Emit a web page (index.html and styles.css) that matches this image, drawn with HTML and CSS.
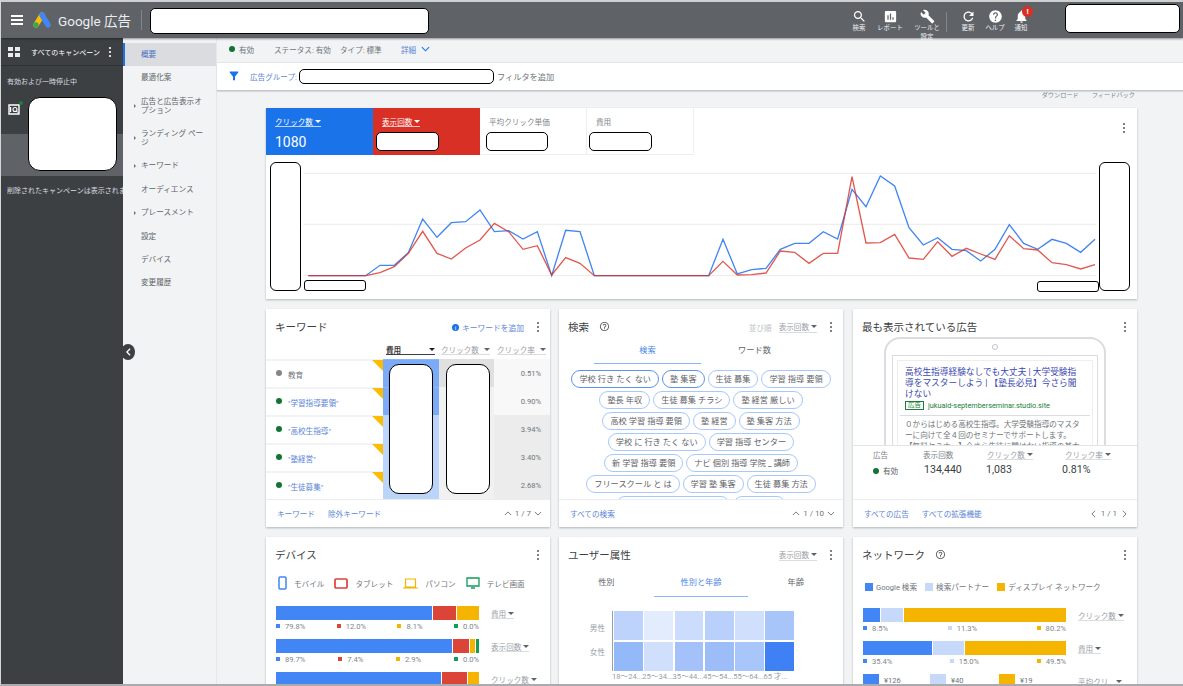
FILE: index.html
```html
<!DOCTYPE html>
<html lang="ja">
<head>
    <meta charset="UTF-8">
    <meta name="viewport" content="width=device-width, initial-scale=1.0">
    <title>Google 広告</title>
    <link rel="stylesheet" href="styles.css">
</head>
<body>
    <svg class="defs" width="0" height="0">
        <symbol id="kebab" viewBox="0 0 4 12"><circle cx="2" cy="2" r="1.1"/><circle cx="2" cy="6" r="1.1"/><circle cx="2" cy="10" r="1.1"/></symbol>
        <symbol id="up" viewBox="0 0 10 6"><path d="M1 5l4-4 4 4" fill="none" stroke="currentColor" stroke-width="1.2"/></symbol>
        <symbol id="down" viewBox="0 0 10 6"><path d="M1 1l4 4 4-4" fill="none" stroke="currentColor" stroke-width="1.2"/></symbol>
        <symbol id="left" viewBox="0 0 6 10"><path d="M5 1L1 5l4 4" fill="none" stroke="currentColor" stroke-width="1.2"/></symbol>
        <symbol id="right" viewBox="0 0 6 10"><path d="M1 1l4 4-4 4" fill="none" stroke="currentColor" stroke-width="1.2"/></symbol>
        <symbol id="help" viewBox="0 0 24 24"><path d="M11 18h2v-2h-2v2zm1-16C6.48 2 2 6.48 2 12s4.48 10 10 10 10-4.48 10-10S17.52 2 12 2zm0 18c-4.41 0-8-3.59-8-8s3.59-8 8-8 8 3.59 8 8-3.59 8-8 8zm0-14c-2.21 0-4 1.79-4 4h2c0-1.1.9-2 2-2s2 .9 2 2c0 2-3 1.75-3 5h2c0-2.25 3-2.5 3-5 0-2.21-1.79-4-4-4z"/></symbol>
    </svg>

    <div class="app">
        <header class="topbar">
            <div class="burger"><span></span><span></span><span></span></div>
            <svg class="ads-logo" viewBox="0 0 18 16">
                <path d="M9 3L3 13" stroke="#fbbc04" stroke-width="5.4" stroke-linecap="round"/>
                <path d="M9 3l6 10" stroke="#4285f4" stroke-width="5.4" stroke-linecap="round"/>
                <circle cx="3" cy="13" r="2.7" fill="#34a853"/>
            </svg>
            <div class="brand">Google 広告</div>
            <div class="top-divider"></div>
            <div class="mask top-search"></div>
            <div class="top-tools">
                <div class="tool tool-search">
                    <svg viewBox="0 0 24 24"><path d="M15.5 14h-.79l-.28-.27C15.41 12.59 16 11.11 16 9.5 16 5.91 13.09 3 9.5 3S3 5.91 3 9.5 5.91 16 9.5 16c1.61 0 3.09-.59 4.23-1.57l.27.28v.79l5 4.99L20.49 19l-4.99-5zm-6 0C7.01 14 5 11.99 5 9.5S7.01 5 9.5 5 14 7.01 14 9.5 11.99 14 9.5 14z"/></svg>
                    <span>検索</span>
                </div>
                <div class="tool tool-report">
                    <svg viewBox="0 0 24 24"><path d="M19 3H5c-1.1 0-2 .9-2 2v14c0 1.1.9 2 2 2h14c1.1 0 2-.9 2-2V5c0-1.1-.9-2-2-2zM9 17H7v-7h2v7zm4 0h-2V7h2v10zm4 0h-2v-4h2v4z"/></svg>
                    <span>レポート</span>
                </div>
                <div class="tool tool-wrench">
                    <svg viewBox="0 0 24 24"><path d="M22.7 19l-9.1-9.1c.9-2.3.4-5-1.5-6.9-2-2-5-2.4-7.4-1.3L9 6 6 9 1.6 4.7C.4 7.1.9 10.1 2.9 12.1c1.9 1.9 4.6 2.4 6.9 1.5l9.1 9.1c.4.4 1 .4 1.4 0l2.3-2.3c.5-.4.5-1.1.1-1.4z"/></svg>
                    <span>ツールと<br>設定</span>
                </div>
                <div class="tool-sep"></div>
                <div class="tool tool-refresh">
                    <svg viewBox="0 0 24 24"><path d="M17.65 6.35C16.2 4.9 14.21 4 12 4c-4.42 0-7.99 3.58-7.99 8s3.57 8 7.99 8c3.73 0 6.84-2.55 7.73-6h-2.08c-.82 2.33-3.04 4-5.65 4-3.31 0-6-2.69-6-6s2.69-6 6-6c1.66 0 3.14.69 4.22 1.78L13 11h7V4l-2.35 2.35z"/></svg>
                    <span>更新</span>
                </div>
                <div class="tool tool-help">
                    <svg viewBox="0 0 24 24"><path d="M12 2C6.48 2 2 6.48 2 12s4.48 10 10 10 10-4.48 10-10S17.52 2 12 2zm1 17h-2v-2h2v2zm2.07-7.75l-.9.92C13.45 12.9 13 13.5 13 15h-2v-.5c0-1.1.45-2.1 1.17-2.83l1.24-1.26c.37-.36.59-.86.59-1.41 0-1.1-.9-2-2-2s-2 .9-2 2H8c0-2.21 1.79-4 4-4s4 1.79 4 4c0 .88-.36 1.68-.93 2.25z"/></svg>
                    <span>ヘルプ</span>
                </div>
                <div class="tool tool-bell">
                    <svg viewBox="0 0 24 24"><path d="M12 22c1.1 0 2-.9 2-2h-4c0 1.1.89 2 2 2zm6-6v-5c0-3.07-1.64-5.64-4.5-6.32V4c0-.83-.67-1.5-1.5-1.5s-1.5.67-1.5 1.5v.68C7.63 5.36 6 7.92 6 11v5l-2 2v1h16v-1l-2-2z"/></svg>
                    <span>通知</span>
                    <b class="alert">!</b>
                </div>
            </div>
            <div class="mask top-account"></div>
        </header>

        <div class="workspace">
            <aside class="sidebar">
                <div class="side-head">
                    <div class="grid-icon"><i></i><i></i><i></i><i></i></div>
                    <span>すべてのキャンペーン</span>
                    <svg class="kebab"><use href="#kebab"/></svg>
                </div>
                <div class="side-label">有効および一時停止中</div>
                <div class="campaign">
                    <svg class="cam-icon" viewBox="0 0 12 11">
                        <path d="M1 1h10v9H1z" fill="none" stroke="#fff" stroke-width="1.4"/>
                        <circle cx="7" cy="5.5" r="2" fill="none" stroke="#fff" stroke-width="1.1"/>
                        <path d="M2.500 3v5" stroke="#fff" stroke-width="1.4"/>
                        <path d="M8.500 7l2 2" stroke="#fff" stroke-width="1"/>
                    </svg>
                    <i class="cam-dot"></i>
                </div>
                <div class="side-selected"></div>
                <div class="side-note">削除されたキャンペーンは表示されません</div>
                <div class="mask side-mask"></div>
            </aside>
            <button class="collapse" aria-label="折りたたむ"><svg viewBox="0 0 6 10"><path d="M5 1L1 5l4 4" fill="none" stroke="#fff" stroke-width="1.600"/></svg></button>

            <nav class="subnav">
                <a class="nav-item active">概要</a>
                <a class="nav-item">最適化案</a>
                <a class="nav-item more">広告と広告表示オプション</a>
                <a class="nav-item more">ランディング ページ</a>
                <a class="nav-item more">キーワード</a>
                <a class="nav-item">オーディエンス</a>
                <a class="nav-item more">プレースメント</a>
                <a class="nav-item">設定</a>
                <a class="nav-item">デバイス</a>
                <a class="nav-item">変更履歴</a>
            </nav>

            <main class="main">
                <div class="status-bar">
                    <i class="dot green"></i><span class="status-on">有効</span>
                    <span class="status-a">ステータス: 有効</span>
                    <span class="status-b">タイプ: 標準</span>
                    <span class="status-more">詳細</span>
                    <svg class="status-chev"><use href="#down"/></svg>
                </div>
                <div class="filter-bar">
                    <svg class="funnel" viewBox="0 0 24 24"><path d="M3.500 4.800C6 8 10 13 10 13v7.500h4V13s4-5 6.500-8.200c.5-.7 0-1.800-.8-1.800H4.300c-.8 0-1.300 1.100-.8 1.800z"/></svg>
                    <span class="filter-name">広告グループ:</span>
                    <div class="mask filter-mask"></div>
                    <span class="filter-add">フィルタを追加</span>
                </div>

                <div class="content">
                    <div class="page-links"><span>ダウンロード</span><span>フィードバック</span></div>

                    <section class="card summary">
                        <div class="metric-tabs">
                            <div class="metric blue">
                                <span class="drop on-color">クリック数</span>
                                <strong>1080</strong>
                            </div>
                            <div class="metric red">
                                <span class="drop on-color">表示回数</span>
                                <div class="mask metric-mask"></div>
                            </div>
                            <div class="metric">
                                <span>平均クリック単価</span>
                                <div class="mask metric-mask"></div>
                            </div>
                            <div class="metric">
                                <span>費用</span>
                                <div class="mask metric-mask"></div>
                            </div>
                            <svg class="kebab summary-kebab"><use href="#kebab"/></svg>
                        </div>
                        <div class="chart">
                            <svg viewBox="-12 -15 2613 432" width="871" height="144">
                                <g class="chart-grid">
                                    <path d="M100 40H2480"/>
                                    <path d="M100 193H2480"/>
                                    <path d="M100 347H2480"/>
                                </g>
                                <polyline class="line-blue" points="115,347 158,347 201,347 244,347 287,347 330,316 373,316 415,278 458,177 501,232 544,188 587,185 630,150 673,215 716,212 759,237 802,215 845,347 887,211 930,215 973,347 1316,347 1359,238 1402,342 1445,329 1488,325 1531,268 1574,250 1617,250 1660,215 1703,237 1746,88 1788,140 1831,48 1874,78 1917,203 1960,255 2003,233 2046,268 2089,272 2132,303 2175,268 2218,194 2261,250 2303,268 2346,238 2389,250 2432,277 2475,238"/>
                                <polyline class="line-red" points="115,347 158,347 201,347 244,347 287,347 330,338 373,320 415,280 458,214 501,280 544,297 587,264 630,240 673,190 716,215 759,268 802,257 845,345 887,293 930,310 973,347 1316,347 1359,304 1402,345 1445,344 1488,339 1531,273 1574,277 1617,310 1660,280 1703,280 1746,50 1788,249 1831,248 1874,223 1917,294 1960,298 2003,245 2046,289 2089,265 2132,282 2175,298 2218,227 2261,266 2303,270 2346,308 2389,314 2432,327 2475,314"/>
                            </svg>
                            <div class="mask chart-y chart-y-left"></div>
                            <div class="mask chart-y chart-y-right"></div>
                            <div class="mask chart-x chart-x-left"></div>
                            <div class="mask chart-x chart-x-right"></div>
                        </div>
                    </section>

                    <div class="card-grid">
                        <section class="card">
                            <div class="card-head">
                                <h2>キーワード</h2>
                                <span class="add-kw"><i class="info">i</i>キーワードを追加</span>
                                <svg class="kebab"><use href="#kebab"/></svg>
                            </div>
                            <div class="kw-table">
                                <div class="kw-row kw-titles">
                                    <span></span>
                                    <span class="drop strong">費用</span>
                                    <span class="drop">クリック数</span>
                                    <span class="drop">クリック率</span>
                                </div>
                                <div class="kw-row">
                                    <div class="kw-name"><i class="dot grey"></i>教育</div>
                                    <div class="cost-high"></div><div class="click-high"></div><div class="ctr-light">0.51%</div>
                                </div>
                                <div class="kw-row">
                                    <div class="kw-name link"><i class="dot green"></i>"学習指導要領"</div>
                                    <div class="cost-high"></div><div class="click-low"></div><div class="ctr-light">0.90%</div>
                                </div>
                                <div class="kw-row">
                                    <div class="kw-name link"><i class="dot green"></i>"高校生指導"</div>
                                    <div class="cost-low"></div><div class="click-low"></div><div class="ctr-dark">3.94%</div>
                                </div>
                                <div class="kw-row">
                                    <div class="kw-name link"><i class="dot green"></i>"塾経営"</div>
                                    <div class="cost-low"></div><div class="click-low"></div><div class="ctr-dark">3.40%</div>
                                </div>
                                <div class="kw-row">
                                    <div class="kw-name link"><i class="dot green"></i>"生徒募集"</div>
                                    <div class="cost-low"></div><div class="click-low"></div><div class="ctr-dark">2.68%</div>
                                </div>
                                <div class="mask kw-mask kw-mask-a"></div>
                                <div class="mask kw-mask kw-mask-b"></div>
                            </div>
                            <div class="card-foot">
                                <a>キーワード</a><a>除外キーワード</a>
                                <span class="pager"><svg class="chev-h"><use href="#up"/></svg>1 / 7<svg class="chev-h"><use href="#down"/></svg></span>
                            </div>
                        </section>

                        <section class="card">
                            <div class="card-head">
                                <h2>検索</h2>
                                <svg class="help-icon"><use href="#help"/></svg>
                                <span class="sort-label">並び順</span>
                                <span class="drop">表示回数</span>
                                <svg class="kebab"><use href="#kebab"/></svg>
                            </div>
                            <div class="tabs search-tabs">
                                <span class="tab active">検索</span>
                                <span class="tab">ワード数</span>
                            </div>
                            <div class="chips">
                                <div class="chip-row"><span class="chip dark">学校 行き たく ない</span><span class="chip dark">塾 集客</span><span class="chip">生徒 募集</span><span class="chip">学習 指導 要領</span></div>
                                <div class="chip-row"><span class="chip">塾長 年収</span><span class="chip">生徒 募集 チラシ</span><span class="chip">塾 経営 厳しい</span></div>
                                <div class="chip-row"><span class="chip">高校 学習 指導 要領</span><span class="chip">塾 経営</span><span class="chip">塾 集客 方法</span></div>
                                <div class="chip-row"><span class="chip">学校 に 行き たく ない</span><span class="chip">学習 指導 センター</span></div>
                                <div class="chip-row"><span class="chip">新 学習 指導 要領</span><span class="chip">ナビ 個別 指導 学院 _ 講師</span></div>
                                <div class="chip-row"><span class="chip">フリースクール と は</span><span class="chip">学習 塾 集客</span><span class="chip">生徒 募集 方法</span></div>
                                <div class="chip-row"><span class="chip">中学生 学校 行き たく ない</span><span class="chip">塾 経営 本</span></div>
                            </div>
                            <div class="card-foot">
                                <a>すべての検索</a>
                                <span class="pager"><svg class="chev-h"><use href="#up"/></svg>1 / 10<svg class="chev-h"><use href="#down"/></svg></span>
                            </div>
                        </section>

                        <section class="card">
                            <div class="card-head">
                                <h2>最も表示されている広告</h2>
                                <svg class="kebab"><use href="#kebab"/></svg>
                            </div>
                            <div class="phone-wrap">
                                <div class="phone">
                                    <i class="phone-cam"></i>
                                    <div class="phone-screen">
                                        <div class="ad">
                                            <div class="ad-title">高校生指導経験なしでも大丈夫 | 大学受験指導をマスターしよう | 【塾長必見】今さら聞けない</div>
                                            <div class="ad-url"><span class="ad-badge">広告</span>jukuaid-septemberseminar.studio.site</div>
                                            <div class="ad-text">０からはじめる高校生指導。大学受験指導のマスターに向けて全４回のセミナーでサポートします。【無料セミナー】今さら生徒に聞けない指導の基本</div>
                                        </div>
                                    </div>
                                </div>
                            </div>
                            <div class="ad-stats">
                                <span class="stat-label">広告</span>
                                <span class="stat-label">表示回数</span>
                                <span class="drop">クリック数</span>
                                <span class="drop">クリック率</span>
                                <span class="stat-state"><i class="dot green"></i>有効</span>
                                <span class="stat-value">134,440</span>
                                <span class="stat-value">1,083</span>
                                <span class="stat-value">0.81%</span>
                            </div>
                            <div class="card-foot">
                                <a>すべての広告</a><a>すべての拡張機能</a>
                                <span class="pager"><svg class="chev-v"><use href="#left"/></svg>1 / 1<svg class="chev-v"><use href="#right"/></svg></span>
                            </div>
                        </section>

                        <section class="card">
                            <div class="card-head">
                                <h2>デバイス</h2>
                                <svg class="kebab"><use href="#kebab"/></svg>
                            </div>
                            <div class="device-legend">
                                <svg class="dev-phone" viewBox="0 0 9 14"><rect x="1" y="1" width="7" height="12" rx="1" fill="none" stroke="#4285f4" stroke-width="1.500"/></svg><span>モバイル</span>
                                <svg class="dev-tablet" viewBox="0 0 14 11"><rect x="1" y="1" width="12" height="9" rx="1" fill="none" stroke="#db4437" stroke-width="1.700"/></svg><span>タブレット</span>
                                <svg class="dev-laptop" viewBox="0 0 15 11"><path d="M2.500 1h10v8h-10zM0 10h15" fill="none" stroke="#f4b400" stroke-width="1.200"/></svg><span>パソコン</span>
                                <svg class="dev-tv" viewBox="0 0 14 12"><path d="M1 1h12v8H1zM5 11h4" fill="none" stroke="#0f9d58" stroke-width="1.300"/></svg><span>テレビ画面</span>
                            </div>
                            <div class="bar-row">
                                <div class="bar-col">
                                    <div class="bar"><i class="c-blue" style="width:77.3%"></i><i class="c-red" style="width:11.8%"></i><i class="c-yellow" style="width:10.9%"></i></div>
                                    <div class="bar-notes"><span class="n-blue">79.8%</span><span class="n-red">12.0%</span><span class="n-yellow">8.1%</span><span class="n-green">0.0%</span></div>
                                </div>
                                <span class="drop">費用</span>
                            </div>
                            <div class="bar-row">
                                <div class="bar-col">
                                    <div class="bar"><i class="c-blue" style="width:87%"></i><i class="c-red" style="width:8.400%"></i><i class="c-yellow" style="width:3%"></i><i class="c-green" style="width:1.600%"></i></div>
                                    <div class="bar-notes"><span class="n-blue">89.7%</span><span class="n-red">7.4%</span><span class="n-yellow">2.9%</span><span class="n-green">0.0%</span></div>
                                </div>
                                <span class="drop">表示回数</span>
                            </div>
                            <div class="bar-row">
                                <div class="bar-col">
                                    <div class="bar"><i class="c-blue" style="width:82%"></i><i class="c-red" style="width:12.800%"></i><i class="c-yellow" style="width:5.200%"></i></div>
                                </div>
                                <span class="drop">クリック数</span>
                            </div>
                        </section>

                        <section class="card">
                            <div class="card-head">
                                <h2>ユーザー属性</h2>
                                <span class="drop head-drop">表示回数</span>
                                <svg class="kebab"><use href="#kebab"/></svg>
                            </div>
                            <div class="tabs demo-tabs">
                                <span class="tab">性別</span>
                                <span class="tab active">性別と年齢</span>
                                <span class="tab">年齢</span>
                            </div>
                            <div class="heat">
                                <div class="heat-y"><span>男性</span><span>女性</span></div>
                                <div class="heat-grid">
                                    <i style="background:#bdd3fb"></i><i style="background:#e3ecfd"></i><i style="background:#cbdcfc"></i><i style="background:#b8d0fa"></i><i style="background:#cfdffc"></i><i style="background:#a7c5f9"></i>
                                    <i style="background:#94b9f8"></i><i style="background:#cfdffc"></i><i style="background:#a4c2f9"></i><i style="background:#9cbdf8"></i><i style="background:#a8c6f9"></i><i style="background:#3f80f4"></i>
                                </div>
                                <div class="heat-x"><span>18～24...</span><span>25～34...</span><span>35～44...</span><span>45～54...</span><span>55～64...</span><span>65 才...</span></div>
                            </div>
                        </section>

                        <section class="card">
                            <div class="card-head">
                                <h2>ネットワーク</h2>
                                <svg class="help-icon"><use href="#help"/></svg>
                                <svg class="kebab"><use href="#kebab"/></svg>
                            </div>
                            <div class="net-legend">
                                <span class="k-blue">Google 検索</span>
                                <span class="k-light">検索パートナー</span>
                                <span class="k-yellow">ディスプレイ ネットワーク</span>
                            </div>
                            <div class="bar-row">
                                <div class="bar-col">
                                    <div class="bar"><i class="c-blue" style="width:8.800%"></i><i class="c-light" style="width:11.400%"></i><i class="c-yellow" style="width:79.800%"></i></div>
                                    <div class="bar-notes"><span class="n-blue">8.5%</span><span class="n-light">11.3%</span><span class="n-yellow">80.2%</span></div>
                                </div>
                                <span class="drop">クリック数</span>
                            </div>
                            <div class="bar-row">
                                <div class="bar-col">
                                    <div class="bar"><i class="c-blue" style="width:34.500%"></i><i class="c-light" style="width:15.800%"></i><i class="c-yellow" style="width:49.700%"></i></div>
                                    <div class="bar-notes"><span class="n-blue">35.4%</span><span class="n-light">15.0%</span><span class="n-yellow">49.5%</span></div>
                                </div>
                                <span class="drop">費用</span>
                            </div>
                            <div class="bar-row">
                                <div class="cpc-col">
                                    <div class="cpc"><i class="c-blue"></i>¥126</div>
                                    <div class="cpc"><i class="c-light"></i>¥40</div>
                                    <div class="cpc"><i class="c-yellow"></i>¥19</div>
                                </div>
                                <span class="drop">平均クリ...</span>
                            </div>
                        </section>
                    </div>
                </div>
            </main>
        </div>
    </div>
</body>
</html>
```

FILE: styles.css
```css
* {
    box-sizing: border-box;
}
html, body {
    margin: 0;
    height: 686px;
    overflow: hidden;
}
body {
    font-family: Roboto, "Noto Sans CJK JP", sans-serif;
    font-size: 7.6px;
    color: #70757a;
    background: #f1f3f4;
}
i {
    font-style: normal;
}
.defs {
    position: absolute;
}
.app {
    height: 686px;
    display: flex;
    flex-direction: column;
    overflow: hidden;
    border-top: 2px solid #cfd0d2;
    border-left: 1px solid #d5d6d8;
    border-bottom: 2px solid #a9abae;
}
.mask {
    background: #fff;
    border: 1.5px solid #000;
    border-radius: 5px;
}

/* top bar */
.topbar {
    height: 36px;
    flex: none;
    display: flex;
    align-items: center;
    background: #5f6368;
    color: #fff;
    position: relative;
    z-index: 3;
    box-shadow: 0 1px 2px rgba(0, 0, 0, 0.4);
}
.burger {
    width: 12px;
    margin-left: 10px;
    display: flex;
    flex-direction: column;
    gap: 2px;
}
.burger span {
    height: 2px;
    background: #fff;
}
.ads-logo {
    width: 18px;
    height: 16px;
    margin-left: 10px;
}
.brand {
    margin-left: 7px;
    font-size: 13.5px;
    color: #eceef0;
    white-space: nowrap;
    width: 74px;
}
.top-divider {
    width: 1px;
    height: 20px;
    margin-left: 9px;
    background: #80868b;
}
.top-search {
    width: 279px;
    height: 26px;
    margin-left: 8px;
    margin-top: 1px;
}
.top-tools {
    margin-left: auto;
    display: flex;
    align-items: flex-start;
    height: 36px;
}
.tool {
    position: relative;
    display: flex;
    flex-direction: column;
    align-items: center;
    padding-top: 7px;
    font-size: 6.4px;
    line-height: 9px;
    text-align: center;
    white-space: nowrap;
    color: #f1f3f4;
}
.tool svg {
    width: 15px;
    height: 15px;
    fill: #fff;
}
.tool-search { width: 24px; }
.tool-report { width: 28px; margin-left: 5px; }
.tool-wrench { width: 30px; margin-left: 8px; }
.tool-sep {
    width: 1px;
    height: 20px;
    margin: 10px 11px 0 4px;
    background: #80868b;
}
.tool-refresh { width: 20px; }
.tool-help { width: 26px; margin-left: 4px; }
.tool-bell { width: 20px; margin-left: 3px; margin-right: 34px; }
.alert {
    position: absolute;
    top: 4px;
    left: 11px;
    width: 11px;
    height: 11px;
    border-radius: 50%;
    background: #d93025;
    color: #fff;
    font-size: 8px;
    line-height: 11px;
}
.top-account {
    width: 115px;
    height: 29px;
    margin-right: 3px;
    margin-top: -3px;
}

/* layout below the bar */
.workspace {
    flex: 1;
    min-height: 0;
    display: flex;
    position: relative;
}
.sidebar {
    width: 122px;
    flex: none;
    background: #3c4043;
    color: #dadce0;
    font-size: 7px;
    position: relative;
    overflow: hidden;
}
.side-head {
    height: 28px;
    display: flex;
    align-items: center;
    padding-left: 7px;
    color: #fff;
    white-space: nowrap;
    border-bottom: 1px solid #2f3235;
}
.grid-icon {
    display: grid;
    grid-template-columns: 5px 5px;
    gap: 2px;
    margin-right: 11px;
}
.grid-icon i {
    height: 4px;
    background: #e8eaed;
}
.side-head .kebab {
    fill: #fff;
    margin-left: 8px;
}
.side-label {
    padding: 10px 0 0 6px;
    height: 24px;
}
.campaign {
    height: 44px;
    padding: 14px 0 0 7px;
    position: relative;
}
.cam-icon {
    width: 12px;
    height: 11px;
    display: block;
}
.cam-dot {
    position: absolute;
    top: 11px;
    left: 18px;
    width: 4px;
    height: 4px;
    border-radius: 50%;
    background: #188038;
}
.side-selected {
    height: 42px;
    background: #5f6368;
}
.side-note {
    padding: 9px 0 0 6px;
    white-space: nowrap;
}
.side-mask {
    position: absolute;
    left: 27px;
    top: 59px;
    width: 89px;
    height: 74px;
    border-radius: 12px;
}
.collapse {
    position: absolute;
    left: 120px;
    top: 306px;
    width: 14px;
    height: 16px;
    padding: 0;
    border: none;
    border-radius: 50%;
    background: #3c4043;
    z-index: 2;
    display: flex;
    align-items: center;
    justify-content: center;
}
.collapse svg {
    width: 5px;
    height: 8px;
}
.subnav {
    width: 94px;
    flex: none;
    padding-top: 4.7px;
    background: #f1f3f4;
    border-right: 1px solid #e6e7e9;
}
.nav-item {
    display: block;
    position: relative;
    padding: 7.2px 11px 7.2px 18px;
    line-height: 9px;
    color: #5f6368;
}
.nav-item.active {
    background: #dadce0;
    border-left: 2px solid #1a73e8;
    padding-left: 16px;
    color: #4a6fc0;
}
.nav-item.more::before {
    content: "";
    position: absolute;
    left: 11px;
    top: 50%;
    margin-top: -2px;
    border-left: 2.5px solid #70757a;
    border-top: 2px solid transparent;
    border-bottom: 2px solid transparent;
}

/* main column */
.main {
    flex: 1;
    min-width: 0;
    display: flex;
    flex-direction: column;
}
.status-bar {
    height: 25px;
    flex: none;
    display: flex;
    align-items: center;
    padding: 0 0 2px 12px;
    border-bottom: 1px solid #e3e4e6;
}
.dot {
    display: inline-block;
    width: 6px;
    height: 6px;
    border-radius: 50%;
    margin-right: 4px;
}
.green { background: #137333; }
.grey { background: #80868b; }
.status-on { width: 35px; }
.status-a { width: 66px; }
.status-b { width: 61px; }
.status-more { color: #5c85d6; }
.status-chev {
    width: 9px;
    height: 6px;
    margin-left: 5px;
    color: #1a73e8;
}
.filter-bar {
    height: 28px;
    flex: none;
    display: flex;
    align-items: center;
    padding: 0 0 1px 11px;
    background: #fff;
    border-bottom: 1px solid #c4c6c9;
    box-shadow: 0 1px 1px rgba(0, 0, 0, 0.1);
    position: relative;
    z-index: 1;
}
.funnel {
    width: 12px;
    height: 12px;
    fill: #1a73e8;
    margin-right: 10px;
}
.filter-name {
    color: #5c85d6;
    width: 49px;
    white-space: nowrap;
}
.filter-mask {
    width: 195px;
    height: 15px;
}
.filter-add {
    margin-left: 3px;
    font-size: 8.2px;
}
.content {
    flex: 1;
    min-height: 0;
    padding: 0 46px 0 49px;
}
.page-links {
    height: 17px;
    display: flex;
    justify-content: flex-end;
    gap: 13px;
    padding-right: 2px;
    font-size: 6.2px;
    line-height: 8px;
    color: #80868b;
}

/* cards */
.card {
    background: #fff;
    box-shadow: 0 1px 2px rgba(60, 64, 67, 0.35);
    display: flex;
    flex-direction: column;
    overflow: hidden;
    min-width: 0;
}
.summary {
    height: 191px;
    margin-bottom: 10px;
}
.card-grid {
    display: grid;
    grid-template-columns: 293px 294px 284px;
    grid-auto-rows: 218px;
    row-gap: 10px;
}
.card-grid > .card {
    width: 284px;
}
.card-head {
    height: 36px;
    flex: none;
    display: flex;
    align-items: center;
    padding: 0 10px 0 9px;
}
.card-head h2 {
    margin: -2px 0 0;
    font-size: 10.5px;
    font-weight: 400;
    color: #3c4043;
    white-space: nowrap;
}
.card-head .kebab {
    margin-left: auto;
}
.card-head .drop + .kebab,
.add-kw + .kebab {
    margin-left: 12px;
}
.kebab {
    width: 4px;
    height: 12px;
    flex: none;
    fill: #5f6368;
}
.card-foot {
    height: 28px;
    flex: none;
    margin-top: auto;
    display: flex;
    align-items: center;
    gap: 13px;
    padding: 0 8px 0 11px;
    background: #fff;
    border-top: 1px solid #eceded;
    color: #5c85d6;
    position: relative;
}
.pager {
    margin-left: auto;
    display: flex;
    align-items: center;
    gap: 3px;
    color: #70757a;
    font-size: 8px;
}
.chev-h {
    width: 8px;
    height: 5px;
}
.chev-v {
    width: 5px;
    height: 8px;
    margin: 0 2px;
}
.drop {
    display: inline-flex;
    align-items: center;
    height: 11px;
    color: #9aa0a6;
    border-bottom: 1px solid #dadce0;
    white-space: nowrap;
}
.drop::after {
    content: "";
    margin-left: 2px;
    border-top: 3px solid #5f6368;
    border-left: 3px solid transparent;
    border-right: 3px solid transparent;
}
.drop.strong {
    font-weight: 700;
    color: #3c4043;
    border-color: #3c4043;
    justify-content: space-between;
}
.drop.strong::after {
    border-top-color: #202124;
}
.drop.on-color {
    color: #fff;
    border-color: rgba(255, 255, 255, 0.7);
}
.drop.on-color::after {
    border-top-color: #fff;
}

/* summary card */
.metric-tabs {
    height: 47px;
    flex: none;
    display: flex;
    align-items: flex-start;
}
.metric {
    width: 107px;
    height: 47px;
    padding: 8px 9px 0;
    border-right: 1px solid #eeeeee;
    border-bottom: 1px solid #eeeeee;
    position: relative;
    color: #80868b;
}
.metric.blue {
    background: #1a73e8;
    border: none;
    color: #fff;
}
.metric.blue strong {
    display: block;
    margin-top: 5px;
    font-size: 14px;
    line-height: 20px;
    font-weight: 400;
}
.metric.red {
    background: #d93025;
    border: none;
    color: #fff;
}
.metric-mask {
    position: absolute;
    left: 6px;
    top: 24px;
    width: 62px;
    height: 19px;
}
.metric.red .metric-mask {
    left: 3px;
    width: 63px;
}
.metric:nth-child(4) .metric-mask {
    left: 2px;
    width: 63px;
}
.summary-kebab {
    margin: 14px 11px 0 auto;
}
.chart {
    position: relative;
    flex: 1;
}
.chart svg {
    display: block;
}
.chart-grid path {
    stroke: #eeeeee;
    stroke-width: 4;
    fill: none;
}
.line-blue,
.line-red {
    fill: none;
    stroke-width: 4;
    stroke-linejoin: miter;
}
.line-blue {
    stroke: #4285f4;
}
.line-red {
    stroke: #d93025;
    stroke-opacity: 0.8;
}
.chart-y {
    position: absolute;
    top: 7px;
    width: 31px;
    height: 129px;
    border-radius: 6px;
}
.chart-y-left { left: 4px; }
.chart-y-right { right: 7px; }
.chart-x {
    position: absolute;
    width: 62px;
    height: 11px;
    border-radius: 3px;
}
.chart-x-left { left: 38px; top: 125px; }
.chart-x-right { right: 38px; top: 126px; }

/* keyword table */
.add-kw {
    margin-left: auto;
    display: flex;
    align-items: center;
    color: #5c85d6;
    font-size: 7.75px;
}
.info {
    width: 7px;
    height: 7px;
    margin-right: 3px;
    border-radius: 50%;
    background: #1a73e8;
    color: #fff;
    font-size: 6px;
    line-height: 7px;
    text-align: center;
}
.kw-table {
    position: relative;
}
.kw-row {
    display: grid;
    grid-template-columns: 117px 56px 55px 56px;
    height: 28px;
}
.kw-titles {
    height: 15px;
    align-items: start;
    margin-top: -1px;
}
.kw-titles .drop {
    margin: 0 4px 0 2px;
    justify-content: space-between;
}
.kw-titles .strong {
    margin-left: 3px;
}
.kw-titles .drop:last-child {
    margin-left: 3px;
}
.kw-name {
    position: relative;
    display: flex;
    align-items: center;
    padding-left: 10px;
    border-top: 2px solid #f1f3f4;
    color: #70757a;
}
.kw-name .dot {
    margin-right: 6px;
    margin-top: -2px;
}
.kw-name.link {
    color: #5c85d6;
}
.kw-name::after {
    content: "";
    position: absolute;
    right: 0;
    top: -1px;
    border-top: 11px solid #fbbc04;
    border-left: 11px solid transparent;
}
.cost-high { background: #7baaf7; border-top: 1px solid #8cb5f8; }
.cost-low { background: #bbd4f9; }
.click-high { background: #e0e0e0; }
.click-low { background: #f1f1f1; }
.ctr-light,
.ctr-dark {
    display: flex;
    align-items: center;
    justify-content: flex-end;
    padding-right: 9px;
    color: #70757a;
}
.ctr-light { background: #f8f8f8; }
.ctr-dark { background: #ececec; }
.kw-mask {
    position: absolute;
    top: 19px;
    width: 44px;
    height: 130px;
    border-radius: 10px;
}
.kw-mask-a { left: 123px; }
.kw-mask-b { left: 180px; }

/* search card */
.help-icon {
    width: 11px;
    height: 11px;
    margin-left: 10px;
    margin-top: -2px;
    fill: #5f6368;
}
.sort-label {
    margin-left: auto;
    margin-right: 7px;
    color: #bdc1c6;
}
.head-drop {
    margin-left: auto;
}
.tabs {
    display: flex;
    flex: none;
    font-size: 8.2px;
}
.tab {
    text-align: center;
    color: #5f6368;
}
.tab.active {
    color: #4a86e8;
    border-bottom: 1.5px solid #8ab4f8;
}
.search-tabs {
    height: 21px;
    margin-top: -2px;
    padding: 0 35px;
}
.search-tabs .tab {
    width: 107px;
}
.chips {
    flex: 1;
    min-height: 0;
    margin-top: 6px;
    overflow: hidden;
    display: flex;
    flex-direction: column;
    gap: 3px;
}
.chip-row {
    display: flex;
    justify-content: center;
    gap: 3px;
    flex: none;
}
.chip {
    height: 18px;
    padding: 0 7px;
    border: 1px solid #a8c7fa;
    border-radius: 9px;
    font-size: 8.2px;
    line-height: 16px;
    color: #5f6368;
    white-space: nowrap;
}
.chip.dark {
    border-color: #5c93ef;
}

/* ad card */
.phone-wrap {
    height: 108px;
    flex: none;
    margin-top: -8px;
    padding: 0 31px;
    overflow: hidden;
}
.phone {
    height: 130px;
    border: 2px solid #dadce0;
    border-radius: 16px;
    position: relative;
    padding: 16px 6px 0;
}
.phone-cam {
    position: absolute;
    top: 5px;
    left: 50%;
    margin-left: -3px;
    width: 6px;
    height: 6px;
    border: 1px solid #bdc1c6;
    border-radius: 50%;
}
.phone-screen {
    height: 100px;
    padding: 4px;
    border: 1px solid #dadce0;
}
.ad {
    padding: 6px 7px 0;
    border: 1px solid #eeeeee;
    height: 100%;
}
.ad-title {
    font-size: 8.7px;
    line-height: 11px;
    color: #3a49b0;
    height: 33px;
    padding-right: 3px;
}
.ad-url {
    display: flex;
    align-items: center;
    height: 11px;
    font-size: 7.3px;
    color: #188038;
    white-space: nowrap;
    margin-bottom: 4px;
}
.ad-badge {
    border: 1px solid #188038;
    padding: 0 2px;
    margin-right: 4px;
    font-size: 6.5px;
    line-height: 7px;
}
.ad-text {
    border-top: 1px solid #dadce0;
    margin: 0 -5px;
    padding: 3px 9px 0 5px;
    line-height: 11px;
}
.ad-stats {
    height: 54px;
    flex: none;
    display: grid;
    grid-template-columns: 50px 64px 78px 48px;
    grid-template-rows: 11px auto;
    padding: 3px 0 0 20px;
    border-top: 1px solid #e3e4e6;
    align-items: start;
    row-gap: 3px;
}
.ad-stats .drop {
    justify-self: start;
}
.stat-label {
    color: #80868b;
}
.stat-state {
    display: flex;
    align-items: center;
    color: #5f6368;
    padding-top: 2px;
}
.stat-value {
    font-size: 10.6px;
    line-height: 13px;
    color: #3c4043;
    margin-left: 1px;
}
.stat-value + .stat-value {
    margin-left: -1px;
}
.stat-value:last-child {
    margin-left: -3px;
}

/* bars */
.device-legend {
    display: flex;
    align-items: center;
    height: 14px;
    margin-top: 3px;
    padding-left: 12px;
    margin-bottom: 16px;
}
.device-legend svg {
    flex: none;
    margin-right: 7px;
}
.device-legend span {
    margin-right: 10px;
    white-space: nowrap;
}
.dev-phone { width: 9px; height: 14px; }
.dev-tablet { width: 14px; height: 11px; }
.dev-laptop { width: 15px; height: 11px; }
.dev-tv { width: 14px; height: 12px; }
.bar-row {
    height: 33px;
    flex: none;
    display: flex;
    align-items: flex-start;
    padding-left: 10px;
}
.bar-col {
    width: 203px;
    flex: none;
}
.bar-row > .drop {
    margin-left: 12px;
    margin-top: 2px;
}
.bar {
    display: flex;
    height: 14px;
}
.bar i {
    display: block;
    height: 100%;
    border-right: 1px solid #fff;
}
.bar i:last-child {
    border-right: none;
}
.c-blue { background: #4285f4; }
.c-red { background: #db4437; }
.c-yellow { background: #f4b400; }
.c-green { background: #0f9d58; }
.c-light { background: #c6d9fa; }
.bar-notes {
    display: flex;
    justify-content: space-between;
    height: 14px;
    line-height: 14px;
    color: #80868b;
}
.bar-notes span::before {
    content: "";
    display: inline-block;
    width: 4px;
    height: 4px;
    margin-right: 5px;
    vertical-align: 1px;
}
.n-blue::before { background: #4285f4; }
.n-red::before { background: #db4437; }
.n-yellow::before { background: #f4b400; }
.n-green::before { background: #0f9d58; }
.n-light::before { background: #c6d9fa; }
.cpc-col {
    width: 203px;
    flex: none;
    display: flex;
}
.cpc {
    display: flex;
    align-items: flex-start;
    width: 67px;
    line-height: 14px;
}
.cpc:nth-child(2) { width: 69px; }
.cpc i {
    width: 16px;
    height: 14px;
    margin-right: 5px;
}

/* demographics */
.demo-tabs {
    height: 24px;
    padding-top: 2px;
}
.demo-tabs .tab {
    width: 95px;
}
.heat {
    display: grid;
    grid-template-columns: 53px 182px;
    grid-template-rows: 60px 12px;
    margin-top: 14px;
}
.heat-y {
    display: flex;
    flex-direction: column;
    align-items: flex-end;
    gap: 14px;
    padding: 13px 7px 0 0;
    line-height: 10px;
    color: #9aa0a6;
}
.heat-grid {
    display: grid;
    grid-template-columns: repeat(6, 1fr);
    grid-template-rows: 1fr 1fr;
    gap: 1.500px;
    padding-left: 1px;
    border-left: 1px solid #9aa0a6;
}
.heat-x {
    grid-column: 2;
    display: grid;
    grid-template-columns: repeat(6, 30.3px);
    white-space: nowrap;
    line-height: 12px;
    color: #9aa0a6;
}

/* network */
.net-legend {
    display: flex;
    margin-top: 9px;
    height: 12px;
    padding-left: 12px;
    margin-bottom: 14px;
    gap: 8px;
    line-height: 12px;
    white-space: nowrap;
}
.net-legend span::before {
    content: "";
    display: inline-block;
    width: 8px;
    height: 8px;
    margin-right: 3px;
    vertical-align: -1px;
}
.k-blue::before { background: #4285f4; }
.k-light::before { background: #c6d9fa; }
.k-yellow::before { background: #f4b400; }
```
